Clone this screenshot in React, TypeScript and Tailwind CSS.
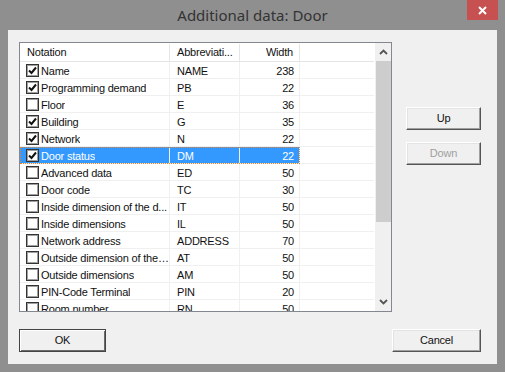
import React from 'react';

const rows = [
  { name: 'Name', abbr: 'NAME', width: 238, checked: true },
  { name: 'Programming demand', abbr: 'PB', width: 22, checked: true },
  { name: 'Floor', abbr: 'E', width: 36, checked: false },
  { name: 'Building', abbr: 'G', width: 35, checked: true },
  { name: 'Network', abbr: 'N', width: 22, checked: true },
  { name: 'Door status', abbr: 'DM', width: 22, checked: true, selected: true },
  { name: 'Advanced data', abbr: 'ED', width: 50, checked: false },
  { name: 'Door code', abbr: 'TC', width: 30, checked: false },
  { name: 'Inside dimension of the d...', abbr: 'IT', width: 50, checked: false },
  { name: 'Inside dimensions', abbr: 'IL', width: 50, checked: false },
  { name: 'Network address', abbr: 'ADDRESS', width: 70, checked: false },
  { name: 'Outside dimension of the ...', abbr: 'AT', width: 50, checked: false },
  { name: 'Outside dimensions', abbr: 'AM', width: 50, checked: false },
  { name: 'PIN-Code Terminal', abbr: 'PIN', width: 20, checked: false },
  { name: 'Room number', abbr: 'RN', width: 50, checked: false },
];

const CheckBox: React.FC<{ checked: boolean }> = ({ checked }) => (
  <div className="w-[13px] h-[13px] border border-[#333] bg-white flex items-center justify-center shrink-0 shadow-[inset_0_0_0_1px_#a0a0a0]">
    {checked && (
      <svg width="9" height="9" viewBox="0 0 9 9">
        <path d="M1 4.5 L3.5 7 L8 1.5" fill="none" stroke="#111" strokeWidth="2" />
      </svg>
    )}
  </div>
);

const Chevron: React.FC<{ down?: boolean }> = ({ down }) => (
  <svg width="9" height="6" viewBox="0 0 9 6" className={down ? 'rotate-180' : ''}>
    <path d="M1 5 L4.5 1.5 L8 5" fill="none" stroke="#555" strokeWidth="1.8" />
  </svg>
);

const Button: React.FC<{ label: string; disabled?: boolean; isDefault?: boolean; className?: string }> = ({
  label,
  disabled,
  isDefault,
  className,
}) => (
  <div
    className={`h-[23px] flex items-center justify-center bg-[#f0f0f0] border ${
      isDefault
        ? 'border-[#444] shadow-[inset_1px_1px_0_#fff,inset_-1px_-1px_0_#6a6a6a]'
        : 'border-t-[#fff] border-l-[#fff] border-r-[#555] border-b-[#555] shadow-[inset_-1px_-1px_0_#a0a0a0,inset_1px_1px_0_#e3e3e3]'
    } ${disabled ? 'text-[#a0a0a0]' : 'text-[#111]'} ${className ?? ''}`}
  >
    {label}
  </div>
);

export default function App() {
  return (
    <div className="w-[505px] h-[372px] bg-[#8f8f8f] flex flex-col font-['Liberation_Sans',Arial,sans-serif] text-[11px] tracking-[-0.2px] leading-none">
      <div className="relative h-[30px] flex items-center justify-center">
        <span className="font-['Noto_Sans',sans-serif] text-[15px] tracking-normal text-[#333] mt-[1px]">Additional data: Door</span>
        <div className="absolute right-[7px] top-0 w-[31px] h-[20px] bg-[#c75050] flex items-center justify-center">
          <svg width="9" height="9" viewBox="0 0 9 9">
            <path d="M1 1 L8 8 M8 1 L1 8" stroke="#fff" strokeWidth="2" />
          </svg>
        </div>
      </div>
      <div className="flex-1 mx-[8px] mb-[8px] bg-[#f0f0f0] flex flex-col px-[11px] pt-[12px]">
        <div className="flex">
          <div className="w-[373px] h-[270px] border border-[#828790] bg-white flex">
            <div className="flex-1 overflow-hidden flex flex-col">
              <div className="h-[19px] shrink-0 flex border-b border-[#e5e5e5] text-[#111] pt-[1px]">
                <div className="w-[150px] border-r border-[#e5e5e5] flex items-center pl-[7px]">Notation</div>
                <div className="w-[70px] border-r border-[#e5e5e5] flex items-center pl-[7px]">Abbreviati...</div>
                <div className="w-[60px] border-r border-[#e5e5e5] flex items-center justify-end pr-[6px]">Width</div>
                <div className="flex-1" />
              </div>
              {rows.map((r, i) => (
                <div key={i} className="h-[17px] shrink-0 flex">
                  <div
                    className={`w-[280px] flex ${
                      r.selected ? 'bg-[#3399ff] text-white outline-1 outline-dotted outline-[#e8842c] -outline-offset-1' : 'text-[#111]'
                    }`}
                  >
                    <div className="w-[150px] border-r border-b border-[#f0f0f0] flex items-center pl-[6px] gap-[2px]">
                      <CheckBox checked={r.checked} />
                      <span className="truncate pt-[2px]">{r.name}</span>
                    </div>
                    <div className="w-[70px] border-r border-b border-[#f0f0f0] flex items-center pl-[7px] pt-[2px]">{r.abbr}</div>
                    <div className="w-[60px] border-r border-b border-[#f0f0f0] flex items-center justify-end pr-[5px] pt-[2px]">{r.width}</div>
                  </div>
                  <div className="flex-1 border-b border-[#f0f0f0]" />
                </div>
              ))}
            </div>
            <div className="w-[17px] bg-[#f0f0f0] flex flex-col items-center border-l border-white">
              <div className="h-[18px] flex items-center justify-center">
                <Chevron />
              </div>
              <div className="w-[15px] h-[161px] bg-[#cdcdcd]" />
              <div className="flex-1" />
              <div className="h-[18px] flex items-center justify-center">
                <Chevron down />
              </div>
            </div>
          </div>
          <div className="flex flex-col ml-[14px] pt-[65px] gap-[12px]">
            <Button label="Up" className="w-[75px]" />
            <Button label="Down" disabled className="w-[75px]" />
          </div>
        </div>
        <div className="flex justify-between mt-[17px] pr-[5px]">
          <Button label="OK" isDefault className="w-[87px]" />
          <Button label="Cancel" className="w-[89px]" />
        </div>
      </div>
    </div>
  );
}
